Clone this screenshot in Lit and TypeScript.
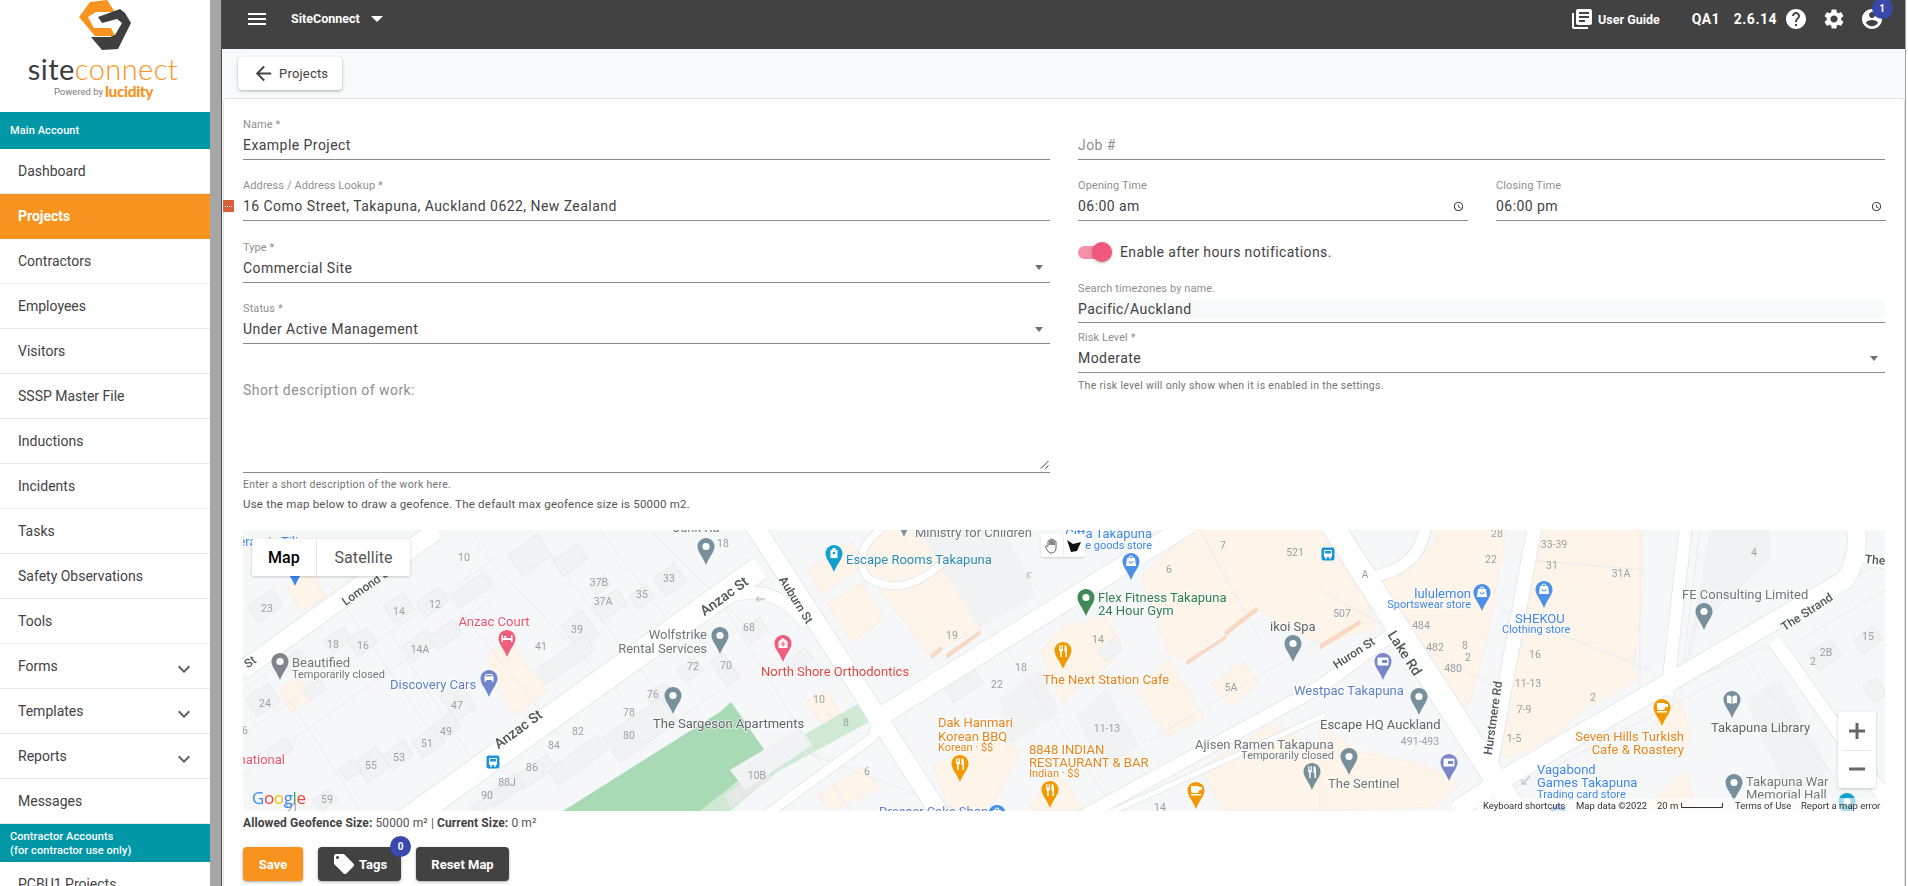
import { LitElement, html, css, svg } from "lit";
import { customElement } from "lit/decorators.js";

const P = {
  menu: "M3 18h18v-2H3v2zm0-5h18v-2H3v2zm0-7v2h18V6H3z",
  help: "M12 2C6.48 2 2 6.48 2 12s4.48 10 10 10 10-4.48 10-10S17.52 2 12 2zm1 17h-2v-2h2v2zm2.07-7.75l-.9.92C13.45 12.9 13 13.5 13 15h-2v-.5c0-1.1.45-2.1 1.17-2.83l1.24-1.26c.37-.36.59-.86.59-1.41 0-1.1-.9-2-2-2s-2 .9-2 2H8c0-2.21 1.79-4 4-4s4 1.79 4 4c0 .88-.36 1.68-.93 2.25z",
  gear: "M19.14 12.94c.04-.3.06-.61.06-.94 0-.32-.02-.64-.07-.94l2.03-1.58c.18-.14.23-.41.12-.61l-1.92-3.32c-.12-.22-.37-.29-.59-.22l-2.39.96c-.5-.38-1.03-.7-1.62-.94l-.36-2.54c-.04-.24-.24-.41-.48-.41h-3.84c-.24 0-.43.17-.47.41l-.36 2.54c-.59.24-1.13.57-1.62.94l-2.39-.96c-.22-.08-.47 0-.59.22L2.74 8.87c-.12.21-.08.47.12.61l2.03 1.58c-.05.3-.09.63-.09.94s.02.64.07.94l-2.03 1.58c-.18.14-.23.41-.12.61l1.92 3.32c.12.22.37.29.59.22l2.39-.96c.5.38 1.03.7 1.62.94l.36 2.54c.05.24.24.41.48.41h3.84c.24 0 .44-.17.47-.41l.36-2.54c.59-.24 1.13-.56 1.62-.94l2.39.96c.22.08.47 0 .59-.22l1.92-3.32c.12-.22.07-.47-.12-.61l-2.01-1.58zM12 15.6c-1.98 0-3.6-1.62-3.6-3.6s1.62-3.6 3.6-3.6 3.6 1.62 3.6 3.6-1.62 3.6-3.6 3.6z",
  account: "M12 2C6.48 2 2 6.48 2 12s4.48 10 10 10 10-4.48 10-10S17.52 2 12 2zm0 3c1.66 0 3 1.34 3 3s-1.34 3-3 3-3-1.34-3-3 1.34-3 3-3zm0 14.2c-2.5 0-4.71-1.28-6-3.22.03-1.99 4-3.08 6-3.08 1.99 0 5.97 1.09 6 3.08-1.29 1.94-3.5 3.22-6 3.22z",
  books: "M4 6H2v14c0 1.1.9 2 2 2h14v-2H4V6zm16-4H8c-1.1 0-2 .9-2 2v12c0 1.1.9 2 2 2h12c1.1 0 2-.9 2-2V4c0-1.1-.9-2-2-2zm-1 9H9V9h10v2zm-4 4H9v-2h6v2zm4-8H9V5h10v2z",
  back: "M20 11H7.83l5.59-5.59L12 4l-8 8 8 8 1.41-1.41L7.83 13H20v-2z",
  more: "M16.59 8.59L12 13.17 7.41 8.59 6 10l6 6 6-6z",
  tag: "M21.41 11.58l-9-9C12.05 2.22 11.55 2 11 2H4c-1.1 0-2 .9-2 2v7c0 .55.22 1.05.59 1.42l9 9c.36.36.86.58 1.41.58.55 0 1.05-.22 1.41-.59l7-7c.37-.36.59-.86.59-1.41 0-.55-.23-1.06-.59-1.42zM5.5 7C4.67 7 4 6.33 4 5.5S4.67 4 5.5 4 7 4.67 7 5.5 6.33 7 5.5 7z",
  clock: "M11.99 2C6.47 2 2 6.48 2 12s4.47 10 9.99 10C17.52 22 22 17.52 22 12S17.52 2 11.99 2zM12 20c-4.42 0-8-3.58-8-8s3.58-8 8-8 8 3.58 8 8-3.58 8-8 8zm.5-13H11v6l5.25 3.15.75-1.23-4.5-2.67z",
};
const ic = (d: string, cls = "") => html`<svg class="ic ${cls}" viewBox="0 0 24 24"><path d=${d}></path></svg>`;

const NAV: [string, boolean, boolean][] = [
  ["Dashboard", false, false], ["Projects", true, false], ["Contractors", false, false], ["Employees", false, false],
  ["Visitors", false, false], ["SSSP Master File", false, false], ["Inductions", false, false], ["Incidents", false, false],
  ["Tasks", false, false], ["Safety Observations", false, false], ["Tools", false, false], ["Forms", false, true],
  ["Templates", false, true], ["Reports", false, true], ["Messages", false, false],
];

/* ---- map data, in page coordinates (viewBox starts at the map's page position) ---- */
const PEACH: string[] = [
  "864,543 888,530 919,530 980,628 930,655 865,570", "808,570 852,543 865,565 823,593", "827,603 862,583 885,618 852,642",
  "1061,627 1107,617 1122,647 1110,663 1061,703 1041,652", "1137,690 1168,658 1204,717 1168,737",
  "1141,577 1191,530 1339,530 1376,627 1320,645 1256,608 1225,630 1185,662 1168,653",
  "1436,530 1506,530 1487,640 1470,703 1459,705 1406,623 1382,582 1436,543",
  "1539,530 1643,530 1644,590 1633,667 1639,680 1582,710 1560,733 1511,758 1498,753 1519,637",
  "934,767 984,737 1022,750 988,811 950,811", "1202,767 1275,723 1320,753 1320,811 1221,811",
  "1320,723 1354,750 1417,763 1462,783 1432,807 1320,811", "1642,811 1687,770 1695,811", "1654,720 1680,700 1692,738 1676,758",
  "1212,683 1244,663 1258,683 1231,705", "818,795 862,767 879,787 831,811", "806,702 827,690 846,727 831,737",
  "1029,811 1040,790 1060,775 1085,811", "288,588 312,572 325,597 300,612", "281,690 300,677 310,700 290,712",
  "487,655 510,640 530,670 548,690 515,715 500,690",
];
const GREYBIG: string[] = [
  "923,537 915,530 1005,530 1036,595 980,628", "1000,700 1040,668 1060,712 1010,745", "1075,717 1105,690 1140,745 1105,768",
  "1682,680 1710,530 1770,530 1770,560 1700,625", "1745,700 1780,680 1830,770 1790,800",
  "730,770 800,728 812,745 745,790",
];
const HOUSES: number[][] = [
  [265,606,30,20],[399,608,24,20],[432,602,28,18],[338,640,24,16],[362,642,24,20],[420,645,30,18],[472,590,40,16],
  [530,555,36,26],[600,585,18,12],[610,605,30,18],[670,580,26,22],[642,597,20,16],[580,630,26,30],[565,660,60,18],
  [263,700,28,22],[458,702,24,30],[446,727,24,18],[428,742,26,20],[398,755,26,18],[372,765,28,24],[325,800,22,14],
  [295,660,20,12],[315,690,20,12],[690,670,22,16],[660,695,24,16],[640,730,70,30],[578,760,60,18],[535,772,40,16],
  [505,790,36,16],[490,800,40,10],[725,670,16,30],[755,630,22,16],[800,660,24,14],[960,680,36,30],[1110,650,20,14],
  [1825,655,26,20],[1868,640,24,16],[1875,690,16,20],[350,770,18,14],[570,560,30,18],[445,635,30,16],[280,750,24,14],
];
const LINES: number[][] = [
  [243,735,500,555],[243,690,290,656],[290,700,360,810],[330,585,430,730],[385,625,485,780],[443,590,560,735],[470,540,620,695],
  [530,530,680,720],[600,530,690,650],[650,530,760,640],[243,775,320,720],[320,720,490,600],[560,720,720,612],[620,760,720,690],
  [800,750,960,811],[905,710,1000,640],[1000,640,1115,810],[960,660,1120,560],[1010,640,1140,545],[1150,740,1320,640],
  [1200,530,1260,640],[1320,590,1500,690],[1500,610,1650,670],[1530,560,1645,570],[1690,680,1780,640],[1740,650,1850,800],
  [1780,620,1885,560],[1800,640,1885,590],[1640,530,1640,700],[1700,530,1680,690],[1520,760,1700,670],[1510,790,1720,680],
  [1100,811,1330,675],[720,600,850,811],
];
const ROADS: [string, number][] = [
  ["M400 825 L760 568", 24],["M243 670 L437 530", 18],["M752 522 L944 820", 18],["M870 723 L1190 524", 18],
  ["M1080 818 L1320 687 L1395 632", 13],["M1330 522 L1516 811", 22],["M1535 525 L1489 773", 14],["M1686 525 L1667 695", 12],
  ["M1455 811 L1510 775 L1845 580 Q1862 552 1855 525", 18],["M1774 640 L1890 805", 14],["M1369 577 Q1420 570 1426 525", 11],
  ["M1856 555 Q1870 563 1890 564", 9],["M766 815 L873 737 L878 720", 9],["M718 600 Q772 578 806 624", 12],
  ["M880 530 Q850 555 868 578 Q905 600 945 560", 7],["M1105 815 L1325 715", 5],
];
const PINK = "#e8526f", BLUE = "#3f86e8", DBLUE = "#5c80c9", GRY = "#70757a", DRK = "#5f6368", ORG = "#e5851c", TEAL = "#2a8ab0", GRN = "#2f7d4f", RED = "#e0453c";
type L = [number, number, string, string, number?, string?];
const LABELS: L[] = [
  [230,541,"Ceramic Tiling",BLUE,13],
  [292,662,"Beautified",GRY,13],[292,674,"Temporarily closed",GRY,11],[494,621,"Anzac Court",PINK,13,"middle"],
  [390,684,"Discovery Cars",DBLUE,13],[285,759,"International",PINK,13,"end"],[707,634,"Wolfstrike",GRY,13,"end"],[707,648,"Rental Services",GRY,13,"end"],
  [653,723,"The Sargeson Apartments",DRK,13],[673,527,"Junk Rd",GRY,13],[915,532,"Ministry for Children",GRY,13],
  [846,559,"Escape Rooms Takapuna",TEAL,13],[1152,533,"Citta Takapuna",BLUE,13,"end"],[1152,545,"Home goods store",BLUE,11,"end"],
  [1098,597,"Flex Fitness Takapuna",GRN,13],[1098,610,"24 Hour Gym",GRN,13],[1270,626,"ikoi Spa",DRK,13],
  [1043,679,"The Next Station Cafe",ORG,13],[761,671,"North Shore Orthodontics",RED,13],
  [938,722,"Dak Hanmari",ORG,13],[938,736,"Korean BBQ",ORG,13],[938,747,"Korean · $$",ORG,11],
  [1029,749,"8848 INDIAN",ORG,13],[1029,762,"RESTAURANT & BAR",ORG,13],[1029,773,"Indian · $$",ORG,11],
  [1195,744,"Ajisen Ramen Takapuna",GRY,13],[1334,755,"Temporarily closed",GRY,11,"end"],[1294,690,"Westpac Takapuna",DBLUE,13],
  [879,811,"Dresser Cake Shop",DBLUE,13],[1471,593,"lululemon",BLUE,13,"end"],[1471,604,"Sportswear store",BLUE,11,"end"],
  [1515,618,"SHEKOU",BLUE,13],[1502,629,"Clothing store",BLUE,11],[1682,594,"FE Consulting Limited",GRY,13],
  [1320,724,"Escape HQ Auckland",DRK,13],[1328,783,"The Sentinel",GRY,13],[1684,736,"Seven Hills Turkish",ORG,13,"end"],
  [1684,749,"Cafe & Roastery",ORG,13,"end"],[1711,727,"Takapuna Library",DRK,13],[1537,769,"Vagabond",BLUE,13],
  [1537,782,"Games Takapuna",BLUE,13],[1537,794,"Trading card store",BLUE,11],[1746,781,"Takapuna War",GRY,13],[1746,794,"Memorial Hall",GRY,13],
];
const ROADLBL: [number, number, string, number, number?][] = [
  [518,729,"Anzac St",-36,14],[724,596,"Anzac St",-36,14],[367,586,"Lomond St",-35,12],[250,662,"St",-35,12],
  [796,600,"Auburn St",58,12],[1354,653,"Huron St",-33,12],[1405,653,"Lake Rd",57,14],[1493,718,"Hurstmere Rd",-82,12],
  [1807,612,"The Strand",-33,12],[1875,560,"The",5,12],
];
const NUMS: [number, number, string][] = [
  [267,608,"23"],[399,611,"14"],[435,604,"12"],[464,557,"10"],[333,644,"18"],[363,645,"16"],[420,649,"14A"],[599,582,"37B"],[603,601,"37A"],
  [669,578,"33"],[642,594,"35"],[577,629,"39"],[541,646,"41"],[265,703,"24"],[457,705,"47"],[446,731,"49"],[427,743,"51"],[399,757,"53"],
  [371,765,"55"],[327,799,"59"],[693,666,"72"],[653,694,"76"],[629,712,"78"],[629,735,"80"],[578,731,"82"],[554,745,"84"],[532,767,"86"],
  [507,782,"88J"],[487,795,"90"],[245,730,"6"],[292,807,"91"],[723,543,"18"],[1223,545,"7"],[1295,552,"521"],[1169,569,"6"],[1098,639,"14"],
  [952,635,"19"],[1021,667,"18"],[997,684,"22"],[1231,687,"5A"],[749,627,"68"],[726,665,"70"],[819,699,"10"],[846,722,"8"],[1107,728,"11-13"],
  [757,775,"10B"],[867,771,"6"],[1160,807,"14"],[1497,533,"28"],[1554,544,"33-39"],[1491,559,"22"],[1552,565,"31"],[1621,573,"31A"],[1754,552,"4"],
  [1365,574,"A"],[1342,613,"507"],[1421,625,"484"],[1435,647,"482"],[1465,645,"8"],[1468,657,"2"],[1453,668,"480"],[1535,654,"16"],[1528,683,"11-13"],
  [1524,709,"7-9"],[1514,738,"1-5"],[1593,697,"2"],[1868,636,"15"],[1826,652,"2B"],[1813,661,"2"],[1420,741,"491-493"],
];

function pin(x: number, y: number, c: string, kind = "dot") {
  let g = svg`<circle cx="0" cy="8.5" r="3.6" fill="#fff"></circle>`;
  if (kind === "bag") g = svg`<path d="M-4 5h8l1 8h-10z" fill="#fff"></path><path d="M-2 5a2 2 0 0 1 4 0" fill="none" stroke="#fff"></path><path d="M-2 8a2 2 0 0 0 4 0" fill="none" stroke=${c}></path>`;
  if (kind === "fork") g = svg`<path d="M-4 3v5a2 2 0 0 0 1.200 1.800V15h1.500V9.800A2 2 0 0 0 0 8V3h-.8v4h-.8V3h-.8v4h-.8V3zM2 3c1.500 0 2 2 2 5v7H2.500v-5H1.500V5C1.500 4 1.700 3 2 3z" fill="#fff"></path>`;
  if (kind === "cup") g = svg`<path d="M-5 4h8v5a2 2 0 0 1-2 2h-4a2 2 0 0 1-2-2zM3 5h3v3H3zM-5 12h10v1.400H-5z" fill="#fff"></path>`;
  if (kind === "bed") g = svg`<path d="M-5.500 5h1.500v3h8V5h1.500v7H4V10H-4v2h-1.500z" fill="#fff"></path><rect x="-3" y="6" width="2.500" height="1.600" fill="#fff"></rect>`;
  if (kind === "car") g = svg`<path d="M-4.500 7L-3 4h6l1.500 3v4.500h-1.800V10H-2.700v1.500h-1.800z" fill="#fff"></path><rect x="-3" y="5" width="6" height="1.300" fill=${c}></rect>`;
  if (kind === "bank") g = svg`<rect x="-5.500" y="4.500" width="11" height="8" rx="1" fill="#fff"></rect><rect x="-1" y="7" width="5" height="3" fill=${c}></rect>`;
  if (kind === "book") g = svg`<path d="M-5 4.500Q-2.500 4-.5 5.500V13Q-2.500 11.800-5 12zM5 4.500Q2.500 4 .5 5.500V13Q2.500 11.800 5 12z" fill="#fff"></path>`;
  if (kind === "cross") g = svg`<path d="M-4.500 6.500L0 3l4.500 3.500V13h-9z" fill="#fff"></path><path d="M-2.500 9h5M0 6.500v5" stroke=${c} stroke-width="1.200"></path>`;
  if (kind === "room") g = svg`<path d="M-3.500 5h2V3h3v2h2v8h-7z" fill="#fff"></path><circle cx="0" cy="8" r="1.300" fill=${c}></circle>`;
  return svg`<g transform="translate(${x} ${y})"><path d="M0 0C-4.700 0-8.500 3.800-8.500 8.500C-8.500 14-3 19 0 27C3 19 8.500 14 8.500 8.500C8.500 3.800 4.700 0 0 0Z" fill=${c}></path>${g}</g>`;
}
const PINS: [number, number, string, string?][] = [
  [280,653,"#80868b"],[507,630,"#ee5f7e","bed"],[489,670,"#7086c9","car"],[295,559,"#3f86e8"],[706,538,"#78909c"],[720,627,"#78909c"],[673,687,"#78909c"],
  [904,510,"#78909c"],[834,545,"#12a0d0","room"],[1131,553,"#4d90e8","bag"],[1086,589,"#3f8a57"],[1293,635,"#78909c"],[1063,642,"#f29900","fork"],
  [783,635,"#ee5f7e","cross"],[960,755,"#f29900","fork"],[1050,781,"#f29900","fork"],[1196,782,"#f29900","cup"],[1312,763,"#78909c","fork"],
  [997,805,"#4d90e8","bag"],[1482,584,"#4d90e8","bag"],[1544,581,"#4d90e8","bag"],[1704,603,"#78909c"],[1383,653,"#7986cb","bank"],[1419,688,"#78909c"],
  [1349,748,"#78909c"],[1449,754,"#7986cb","bank"],[1662,699,"#f29900","cup"],[1732,691,"#78909c","book"],[1734,774,"#78909c"],[1847,793,"#12a0d0"],[1558,805,"#4d90e8"],
];

function mapSvg() {
  return html`<svg class="mapsvg" viewBox="243 530 1642 281" preserveAspectRatio="none">
    <rect x="243" y="530" width="1642" height="281" fill="#f6f7f8"></rect>
    ${PEACH.map(p => svg`<polygon points=${p} fill="#fdf4ea" stroke="#fcebda" stroke-width=".7"></polygon>`)}
    <polygon points="563,811 720,712 731,702 777,768 724,800 700,811" fill="#a8dab5"></polygon>
    <polygon points="777,750 872,696 880,716 777,772 730,811 700,811" fill="#cfe9d5"></polygon>
    <polygon points="725,795 765,768 772,778 730,808" fill="#e6e8e6"></polygon>
    ${GREYBIG.map(p => svg`<polygon points=${p} fill="#f1f2f3"></polygon>`)}
    ${LINES.map(l => svg`<line x1=${l[0]} y1=${l[1]} x2=${l[2]} y2=${l[3]} stroke="#e9ebee"></line>`)}
    ${HOUSES.map(h => svg`<rect x=${h[0] - h[2] / 2} y=${h[1] - h[3] / 2} width=${h[2]} height=${h[3]} fill="#f1f2f3" stroke="#e6e7e9" stroke-width=".8" transform="rotate(-35 ${h[0]} ${h[1]})"></rect>`)}
    ${ROADS.map(r => svg`<path d=${r[0]} fill="none" stroke="#e6e8eb" stroke-width=${r[1] + 2}></path>`)}
    ${ROADS.map(r => svg`<path d=${r[0]} fill="none" stroke="#fff" stroke-width=${r[1]}></path>`)}
    <path d="M756 599h9M756 599l3-2.500M756 599l3 2.500" fill="none" stroke="#c2c6cb" stroke-width="1.300"></path>
    <path d="M1027 573l4 5 M1027 573l5-.5 M1027 573l1 6" fill="none" stroke="#c2c6cb" stroke-width="1.200"></path>
    <path d="M1522 784l8-8M1522 784h5M1522 784v-5" fill="none" stroke="#c2c6cb" stroke-width="1.300"></path>
    <g fill="#f8d8c2"><polygon points="930,655 941,646 943,650 932,659"></polygon><polygon points="946,654 980,630 981,634 947,659"></polygon>
      <polygon points="1224,632 1256,607 1258,611 1226,636"></polygon><polygon points="1186,661 1226,635 1227,638 1187,665"></polygon><polygon points="1320,644 1360,620 1361,624 1320,650"></polygon></g>
    ${NUMS.map(n => svg`<text x=${n[0]} y=${n[1]} class="num" text-anchor="middle">${n[2]}</text>`)}
    ${ROADLBL.map(r => svg`<text x=${r[0]} y=${r[1]} class="road" font-size=${r[4] ?? 12} text-anchor="middle" transform="rotate(${r[3]} ${r[0]} ${r[1]})">${r[2]}</text>`)}
    ${LABELS.map(l => svg`<text x=${l[0]} y=${l[1]} class="lbl" fill=${l[3]} font-size=${l[4] ?? 13} text-anchor=${l[5] ?? "start"}>${l[2]}</text>`)}
    ${PINS.map(p => pin(p[0], p[1], p[2], p[3]))}
    <g transform="translate(493 762)"><rect x="-6.500" y="-6.500" width="13" height="13" rx="2" fill="#1a94da"></rect><rect x="-4" y="-4" width="8" height="7" rx="1" fill="#fff"></rect><circle cx="-2" cy="4" r="1" fill="#fff"></circle><circle cx="2" cy="4" r="1" fill="#fff"></circle><rect x="-3" y="-3" width="6" height="2.500" fill="#1a94da"></rect></g>
    <g transform="translate(1328 554)"><rect x="-6.500" y="-6.500" width="13" height="13" rx="2" fill="#1a94da"></rect><rect x="-4" y="-4" width="8" height="7" rx="1" fill="#fff"></rect><circle cx="-2" cy="4" r="1" fill="#fff"></circle><circle cx="2" cy="4" r="1" fill="#fff"></circle><rect x="-3" y="-3" width="6" height="2.500" fill="#1a94da"></rect></g>
    <text x="252" y="797" class="glogo"><tspan fill="#4285f4">G</tspan><tspan fill="#ea4335">o</tspan><tspan fill="#fbbc05">o</tspan><tspan fill="#4285f4">g</tspan><tspan fill="#34a853">l</tspan><tspan fill="#ea4335">e</tspan></text>
    <rect x="1477" y="798" width="408" height="13" fill="#fff" fill-opacity=".62"></rect>
    <g class="attr">
      <text x="1483" y="805">Keyboard shortcuts</text><text x="1576" y="805">Map data ©2022</text><text x="1657" y="805">20 m</text>
      <text x="1735" y="805">Terms of Use</text><text x="1801" y="805">Report a map error</text>
    </g>
    <path d="M1681.500 803v4.500h41v-4.500" fill="none" stroke="#333"></path>
  </svg>`;
}

@customElement("app-root")
export class AppRoot extends LitElement {
  static styles = css`
    :host { display: block; width: 1908px; height: 886px; overflow: hidden; font-family: Roboto, sans-serif; color: #424242; }
    * { box-sizing: border-box; }
    .ic { width: 24px; height: 24px; fill: currentColor; display: block; flex: none; }
    .shell { display: flex; height: 886px; background: #fff; }
    .side { width: 210px; flex: none; height: 886px; overflow: hidden; background: #fff; }
    .logo { height: 112px; display: flex; flex-direction: column; align-items: center; }
    .mark { width: 53px; height: 50px; flex: none; display: block; }
    .word { font: 300 29px/26px Lato, sans-serif; color: #f7931e; margin-top: 6px; margin-left: -4px; letter-spacing: .45px; white-space: nowrap; }
    .word b { font-weight: 400; color: #3d3d3d; }
    .pow { display: flex; align-items: center; gap: 2px; height: 18px; margin-left: -3px; font-size: 9.500px; color: #7c7c7c; }
    .pow b { color: #f7931e; font: 900 15.500px/18px Lato, sans-serif; letter-spacing: -.4px; }
    .hd { background: #0097a7; color: #fff; font-size: 11px; font-weight: 500; line-height: 14px; padding: 0 10px; display: flex; flex-direction: column; justify-content: center; letter-spacing: .1px; }
    .hd.a { height: 37px; }
    .hd.b { height: 38px; padding-top: 1px; }
    .row { height: 45px; padding: 0 18px; border-bottom: 1px solid #e6e6e6; display: flex; align-items: center; justify-content: space-between; font-size: 14px; color: #424242; }
    .row.on { background: #f7931e; color: #fff; font-weight: 700; border-bottom-color: #f7931e; }
    .row .ic { width: 24px; height: 24px; color: #616161; margin-right: -4px; margin-top: 6px; }
    .strip { width: 12px; flex: none; background: #a6a6a6; border-right: 1px solid #4a4a4a; }
    .main { width: 1683px; flex: none; display: flex; flex-direction: column; background: #f8f9fa; height: 886px; overflow: hidden; }
    .edge { width: 3px; flex: none; background: #fff; border-left: 1px solid #a0a0a0; }
    .top { height: 49px; flex: none; background: #424242; color: #fff; display: flex; align-items: center; padding: 0 0 11px 23px; }
    .top .burger { width: 24px; height: 24px; margin-right: 22px; }
    .brand { font-size: 12.500px; font-weight: 700; margin-top: -1px; }
    .caret { width: 0; height: 0; border: 6px solid transparent; border-top: 6px solid #fff; border-bottom: 0; margin-left: 11px; }
    .grow { flex: 1; }
    .guide { display: flex; align-items: center; gap: 4px; font-size: 12.500px; font-weight: 700; }
    .qa { font-size: 14px; font-weight: 700; margin-left: 32px; letter-spacing: .3px; }
    .ver { font-size: 14px; font-weight: 700; margin-left: 14px; letter-spacing: .5px; }
    .tbtn { margin-left: 14px; position: relative; }
    .ver + .tbtn { margin-left: 7px; }
    .tbtn .bdg { position: absolute; left: 11.500px; top: -9.500px; }
    .spacer { width: 21px; flex: none; }
    .bdg { width: 21px; height: 21px; border-radius: 50%; background: #3949ab; color: #fff; font-size: 10px; font-weight: 700; display: flex; align-items: center; justify-content: center; }
    .sub { height: 49px; flex: none; padding: 8px 16px; }
    .backbtn { width: 104px; height: 33px; background: #fff; border-radius: 4px; box-shadow: 0 1px 3px rgba(0,0,0,.3); display: flex; align-items: center; padding: 0 0 1px 14px; gap: 4px; font-size: 13px; color: #424242; letter-spacing: .2px; }
    .backbtn .ic { width: 23px; height: 23px; }
    .card { flex: 1; background: #fff; margin: 0 0 0 1px; border: 1px solid #e2e2e2; border-bottom: 0; border-radius: 4px 4px 0 0; padding: 18px 19px 0 19px; }
    .form { display: grid; grid-template-columns: 807px 807px; column-gap: 28px; }
    .col { display: flex; flex-direction: column; }
    .field { height: 43px; border-bottom: 1px solid #8a8a8a; position: relative; flex: none; }
    .field + .field { margin-top: 18.400px; }
    .times .field + .field { margin-top: 0; }
    .lab { display: block; height: 14px; font-size: 11px; line-height: 16px; color: #8f8f8f; letter-spacing: .1px; }
    .val { display: flex; align-items: center; justify-content: space-between; height: 28px; font-size: 14px; color: #424242; letter-spacing: .45px; padding-right: 7px; }
    .ph { color: #8f8f8f; }
    .tri { width: 0; height: 0; border: 4.500px solid transparent; border-top: 5px solid #6f6f6f; border-bottom: 0; }
    .val .ic { width: 11px; height: 11px; color: #333; margin-right: -3px; }
    .area { height: 129px; border-bottom: 1px solid #8a8a8a; padding-top: 36px; font-size: 14px; line-height: 20px; color: #8f8f8f; position: relative; letter-spacing: .45px; }
    .grip { position: absolute; right: 1px; bottom: 3px; width: 10px; height: 10px; }
    .help { height: 14px; line-height: 14px; font-size: 10.500px; color: #757575; letter-spacing: .3px; margin-top: 5px; }
    .help.d { font-size: 11.500px; color: #555; letter-spacing: .22px; }
    .risk + .help { margin-top: 6px; }
    .times { display: grid; grid-template-columns: 390px 390px; column-gap: 28px; margin-top: 18.400px; width: 808px; }
    .sw { display: flex; align-items: center; height: 20px; margin-top: 21px; font-size: 14px; letter-spacing: .4px; color: #424242; }
    .track { width: 32px; height: 13px; background: #f48fa8; border-radius: 7px; position: relative; margin-right: 10px; flex: none; }
    .knob { position: absolute; right: -2px; top: -4px; width: 20px; height: 20px; border-radius: 50%; background: #f0587d; box-shadow: 0 1px 3px rgba(0,0,0,.3); }
    .tz { margin-top: 19px; height: 42px; border-bottom: 1px solid #8a8a8a; flex: none; }
    .tzv { margin-top: 5px; height: 18px; background: #f8f9fa; font-size: 14px; line-height: 18px; color: #424242; letter-spacing: .45px; }
    .risk { margin-top: 7px; height: 43px; border-bottom: 1px solid #8a8a8a; flex: none; }
    .map { position: relative; width: 1642px; height: 281px; margin-top: 19px; overflow: hidden; }
    .mapsvg { width: 1642px; height: 281px; display: block; filter: blur(.35px); }
    .num { font: 400 10.500px Roboto, sans-serif; fill: #9aa0a6; dominant-baseline: central; }
    .road { font-family: Roboto, sans-serif; font-weight: 500; fill: #4f5458; dominant-baseline: central; paint-order: stroke; stroke: #fff; stroke-width: 1.500px; }
    .lbl { font-family: Roboto, sans-serif; dominant-baseline: central; paint-order: stroke; stroke: #fff; stroke-width: 1.500px; stroke-opacity: .8; }
    .glogo { font: 400 17px "Open Sans", sans-serif; letter-spacing: -.4px; dominant-baseline: central; }
    .attr { font: 400 9.500px Roboto, sans-serif; fill: #333; }
    .attr text { dominant-baseline: central; }
    .mt { position: absolute; left: 9px; top: 9px; width: 158px; height: 37px; background: #fff; border-radius: 2px; box-shadow: 0 1px 3px rgba(0,0,0,.2); display: flex; font-size: 16px; align-items: center; letter-spacing: .1px; }
    .mt span { display: flex; align-items: center; justify-content: center; height: 100%; }
    .mt .m { width: 65px; color: #000; font-weight: 500; border-right: 1px solid #e6e6e6; }
    .mt .s { flex: 1; color: #565656; }
    .dt { position: absolute; left: 798px; top: 4px; width: 44px; height: 23px; background: #fff; box-shadow: 0 1px 2px rgba(0,0,0,.15); border-radius: 2px; display: flex; }
    .dt div { flex: 1; display: flex; align-items: center; justify-content: center; }
    .dt div + div { border-left: 1px solid #eee; }
    .zm { position: absolute; left: 1595px; top: 182px; width: 38px; height: 76px; background: #fff; border-radius: 2px; box-shadow: 0 1px 3px rgba(0,0,0,.2); display: flex; flex-direction: column; align-items: center; justify-content: center; }
    .zm div { height: 38px; width: 100%; display: flex; align-items: center; justify-content: center; }
    .zm div + div { background: linear-gradient(#e6e6e6, #e6e6e6) top center / 28px 1px no-repeat; }
    .zm svg { width: 18px; height: 18px; fill: #666; }
    .geo { margin-top: 5px; height: 14px; font-size: 12px; line-height: 14px; color: #555; letter-spacing: .1px; }
    .geo b { font-weight: 700; color: #424242; }
    .actions { display: flex; margin-top: 17px; gap: 15px; }
    .btn { height: 34px; border-radius: 4px; border: 0; background: #424242; color: #fff; font: 700 13px Roboto, sans-serif; display: flex; align-items: center; justify-content: center; box-shadow: 0 1px 3px rgba(0,0,0,.35); position: relative; }
    .btn.save { width: 60px; background: #f7931e; }
    .btn.tags { width: 83px; gap: 3px; }
    .btn.tags .ic { width: 24px; height: 24px; }
    .btn.reset { width: 93px; }
    .btn .bdg { position: absolute; right: -10px; top: -11px; }
    .addr { position: absolute; left: -20px; top: 22px; width: 11px; height: 12px; background: #d9603b; border-radius: 1px; display: flex; align-items: center; justify-content: center; }
    .addr i { display: block; width: 8px; height: 1px; background: linear-gradient(90deg, #fff 50%, transparent 50%) 0 0 / 2px 1px; }
  `;

  render() {
    const field = (label: string, value: string, opt: { tri?: boolean; clock?: boolean; ph?: boolean } = {}) => html`
      <div class="field">
        <span class="lab">${label}</span>
        <div class="val ${opt.ph ? "ph" : ""}"><span>${value}</span>${opt.tri ? html`<span class="tri"></span>` : ""}${opt.clock ? ic(P.clock) : ""}</div>
      </div>`;
    return html`<div class="shell">
      <nav class="side">
        <div class="logo">
          <svg class="mark" viewBox="79 0 53 50">
            <polygon points="79,17 90,2 107,0 115,12 96,12 88,17 94,28 111,28 115,36 95,36" fill="#f7931e"></polygon>
            <polygon points="98,17 120,9 125,13 131,23 118,49 102,50 91,37 110,37 115,35 122,23 117,19 102,23" fill="#3f3f3f"></polygon>
          </svg>
          <div class="word"><b>site</b>connect</div>
          <div class="pow"><span>Powered by</span><b>lucidity</b></div>
        </div>
        <div class="hd a">Main Account</div>
        ${NAV.map(([t, on, chev]) => html`<div class="row ${on ? "on" : ""}"><span>${t}</span>${chev ? ic(P.more) : ""}</div>`)}
        <div class="hd b"><span>Contractor Accounts</span><span>(for contractor use only)</span></div>
        <div class="row"><span>PCBU1 Projects</span></div>
      </nav>
      <div class="strip"></div>
      <div class="main">
        <header class="top">
          ${ic(P.menu, "burger")}
          <span class="brand">SiteConnect</span><span class="caret"></span>
          <span class="grow"></span>
          <span class="guide">${ic(P.books)}<span>User Guide</span></span>
          <span class="qa">QA1</span><span class="ver">2.6.14</span>
          <span class="tbtn">${ic(P.help)}</span><span class="tbtn">${ic(P.gear)}</span>
          <span class="tbtn">${ic(P.account)}<span class="bdg">1</span></span>
          <span class="spacer"></span>
        </header>
        <div class="sub"><div class="backbtn">${ic(P.back)}<span>Projects</span></div></div>
        <section class="card">
          <div class="form">
            <div class="col">
              ${field("Name *", "Example Project")}
              <div class="field"><span class="addr"><i></i></span><span class="lab">Address / Address Lookup *</span><div class="val"><span>16 Como Street, Takapuna, Auckland 0622, New Zealand</span></div></div>
              ${field("Type *", "Commercial Site", { tri: true })}
              ${field("Status *", "Under Active Management", { tri: true })}
              <div class="area">Short description of work:
                <svg class="grip" viewBox="0 0 10 10"><path d="M2 9.500L9.500 2M6.500 9.500L9.500 6.500" stroke="#444" fill="none"></path></svg>
              </div>
              <div class="help">Enter a short description of the work here.</div>
              <div class="help d">Use the map below to draw a geofence. The default max geofence size is 50000 m2.</div>
            </div>
            <div class="col">
              ${field("", "Job #", { ph: true })}
              <div class="times">
                ${field("Opening Time", "06:00 am", { clock: true })}
                ${field("Closing Time", "06:00 pm", { clock: true })}
              </div>
              <div class="sw"><span class="track"><span class="knob"></span></span><span>Enable after hours notifications.</span></div>
              <div class="tz"><span class="lab">Search timezones by name.</span><div class="tzv">Pacific/Auckland</div></div>
              <div class="risk"><span class="lab">Risk Level *</span><div class="val"><span>Moderate</span><span class="tri"></span></div></div>
              <div class="help">The risk level will only show when it is enabled in the settings.</div>
            </div>
          </div>
          <div class="map">
            ${mapSvg()}
            <div class="mt"><span class="m">Map</span><span class="s">Satellite</span></div>
            <div class="dt">
              <div><svg width="16" height="18" viewBox="0 0 16 18"><path d="M4 9V4.500a1 1 0 0 1 2 0V8M6 8V3a1 1 0 0 1 2 0v5M8 8V3.500a1 1 0 0 1 2 0V8M10 8V5a1 1 0 0 1 2 0v6c0 3-2 5-4.500 5S4.500 15 3 12.500L1.500 10c-.6-1 .8-2 1.500-1l1 1.200" fill="none" stroke="#555" stroke-width=".9"></path></svg></div>
              <div><svg width="16" height="14" viewBox="0 0 16 14"><path d="M1 1l6 4 8-2-4 9-6 1z" fill="#111"></path></svg></div>
            </div>
            <div class="zm">
              <div><svg viewBox="0 0 18 18"><path d="M7.500 1h3v6.500H17v3h-6.500V17h-3v-6.500H1v-3h6.500z"></path></svg></div>
              <div><svg viewBox="0 0 18 18"><path d="M1 7.500h16v3H1z"></path></svg></div>
            </div>
          </div>
          <div class="geo"><b>Allowed Geofence Size:</b> 50000 m² | <b>Current Size:</b> 0 m²</div>
          <div class="actions">
            <button class="btn save">Save</button>
            <button class="btn tags">${ic(P.tag)}<span>Tags</span><span class="bdg">0</span></button>
            <button class="btn reset">Reset Map</button>
          </div>
        </section>
      </div>
      <div class="edge"></div>
    </div>`;
  }
}
